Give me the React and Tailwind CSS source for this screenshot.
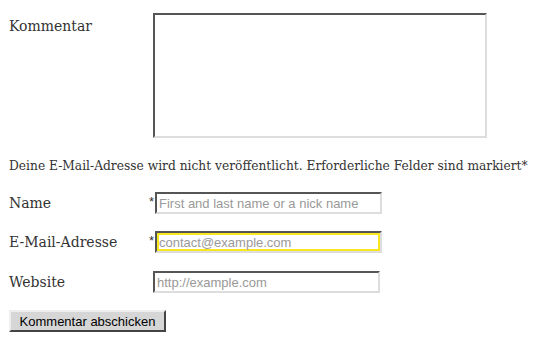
import { useState } from "react";

const serif = { fontFamily: '"DejaVu Serif", Georgia, serif' };

const inputBase =
  "h-[22px] w-[227px] border-2 border-t-[#555] border-l-[#555] border-r-[#ddd] border-b-[#ddd] bg-white px-[2px] text-[13px] text-[#333] placeholder:text-[#999] outline-none font-['Liberation_Sans',Arial,sans-serif]";

const FieldRow = ({ label, required, placeholder, focused, className }) => (
  <div className={`flex h-[22px] items-center ${className}`}>
    <span className={`${required ? "w-[137px]" : "w-[144px]"} shrink-0 text-[14px] text-[#333]`} style={serif}>
      {label}
    </span>
    {required && (
      <span className="w-[9px] self-start pt-[3px] pr-[1px] text-right text-[13px] leading-none text-[#333] font-['Liberation_Sans',Arial,sans-serif]">
        *
      </span>
    )}
    <input
      type="text"
      placeholder={placeholder}
      className={`${inputBase} ${focused ? "shadow-[inset_0_0_0_2px_#fbe720]" : ""}`}
    />
  </div>
);

export default function App() {
  const [comment, setComment] = useState("");

  return (
    <div className="min-h-[341px] bg-white pl-[9px] pt-[13px] text-[#333]">
      <div className="flex">
        <label className="w-[144px] shrink-0 pt-[3px] text-[14px]" style={serif}>
          Kommentar
        </label>
        <textarea
          value={comment}
          onChange={(e) => setComment(e.target.value)}
          className="h-[125px] w-[334px] resize-none border-2 border-t-[#555] border-l-[#555] border-r-[#ddd] border-b-[#ddd] bg-white outline-none"
        />
      </div>

      <p className="mt-[18px] whitespace-nowrap text-[12.25px] leading-[20px]" style={serif}>
        Deine E-Mail-Adresse wird nicht veröffentlicht. Erforderliche Felder sind markiert*
      </p>

      <FieldRow className="mt-[16px]" label="Name" required placeholder="First and last name or a nick name" />
      <FieldRow className="mt-[17px]" label="E-Mail-Adresse" required focused placeholder="contact@example.com" />
      <FieldRow className="mt-[18px]" label="Website" placeholder="http://example.com" />

      <button
        type="button"
        className="mt-[17px] h-[22px] w-[157px] border-2 border-t-[#eee] border-l-[#eee] border-r-[#444] border-b-[#444] bg-[#d6d6d6] text-[13px] text-black font-['Liberation_Sans',Arial,sans-serif]"
      >
        Kommentar abschicken
      </button>
    </div>
  );
}
